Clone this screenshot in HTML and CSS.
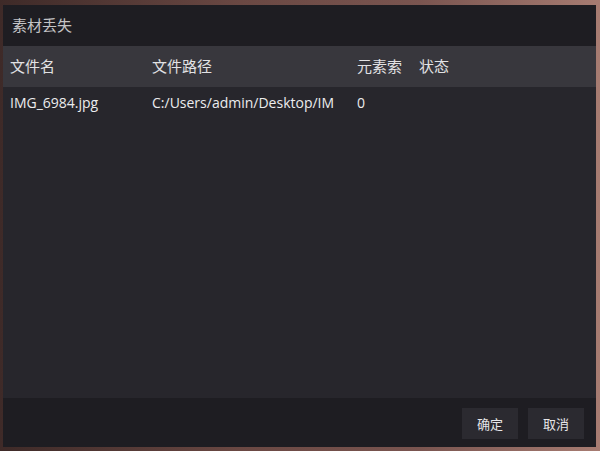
FILE: index.html
```html
<!DOCTYPE html>
<html lang="zh-CN">
<head>
    <meta charset="UTF-8">
    <title>素材丢失</title>
    <link rel="stylesheet" href="styles.css">
</head>
<body>
    <div class="dialog">
        <div class="title">素材丢失</div>
        <div class="table">
            <div class="row head">
                <span>文件名</span>
                <span>文件路径</span>
                <span>元素索</span>
                <span class="status">状态</span>
            </div>
            <div class="row item">
                <span>IMG_6984.jpg</span>
                <span class="path">C:/Users/admin/Desktop/IM</span>
                <span>0</span>
                <span class="status"></span>
            </div>
        </div>
        <div class="footer">
            <button class="btn">确定</button>
            <button class="btn">取消</button>
        </div>
    </div>
</body>
</html>
```

FILE: styles.css
```css
html, body {
    height: 100%;
}

body {
    margin: 0;
    padding: 5px 4px 4px 3px;
    box-sizing: border-box;
    background: linear-gradient(90deg, #3e2a28, #6a4843 40%, #7a5550 70%, #a77c72);
    font-family: "Open Sans", "Noto Sans CJK SC", sans-serif;
}

.dialog {
    height: 100%;
    display: flex;
    flex-direction: column;
    background-color: #1e1d22;
}

.title {
    height: 41px;
    line-height: 41px;
    padding-left: 9px;
    font-size: 15px;
    color: #c4c4c6;
}

.table {
    flex: 1;
    background-color: #27262c;
}

.row {
    display: grid;
    grid-template-columns: 142px 205px 62px 1fr;
    padding-left: 7px;
}

.row span {
    white-space: nowrap;
    overflow: hidden;
}

.head {
    height: 41px;
    line-height: 41px;
    background-color: #38373d;
    font-size: 15px;
    color: #e2e2e4;
}

.item {
    height: 31px;
    line-height: 31px;
    font-size: 14px;
    color: #ececee;
}

.footer {
    height: 49px;
    display: flex;
    justify-content: flex-end;
    align-items: center;
    gap: 10px;
    padding-right: 12px;
}

.btn {
    width: 56px;
    height: 31px;
    border: none;
    background-color: #2b2a30;
    color: #e6e6e8;
    font-family: "Noto Sans CJK SC", sans-serif;
    font-size: 13px;
    padding: 0;
    margin-top: 1px;
}
```
